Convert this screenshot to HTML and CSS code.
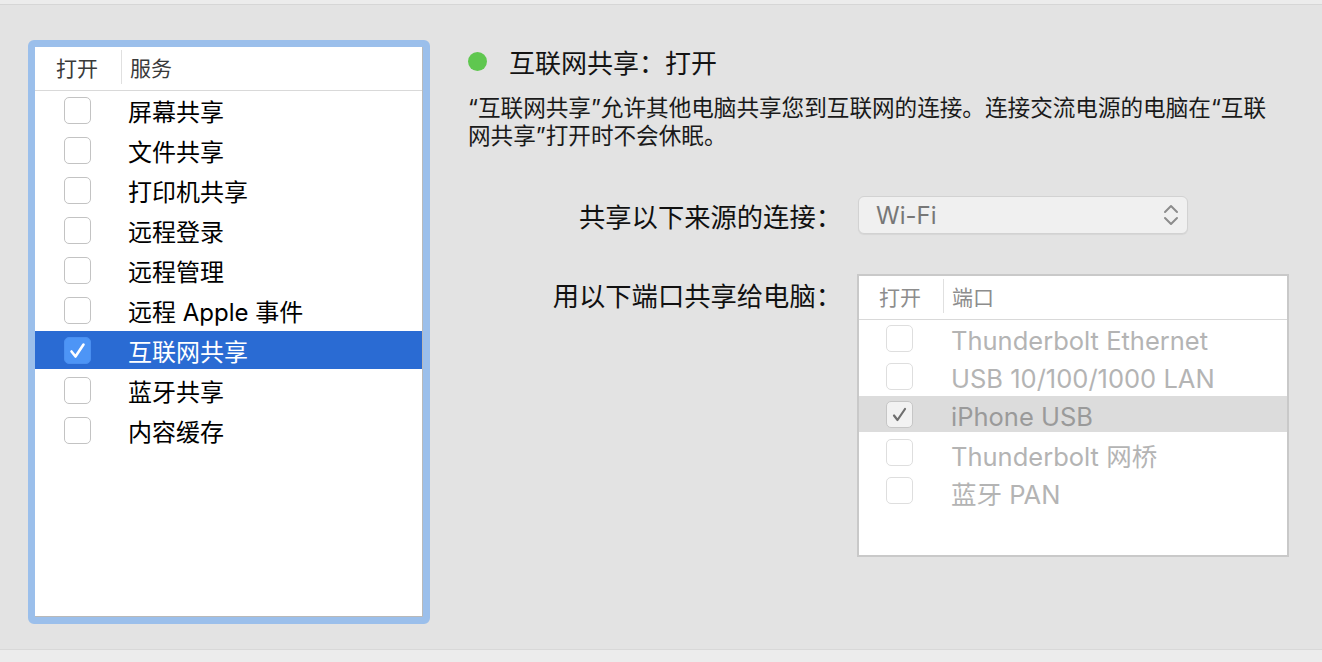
FILE: index.html
```html
<!DOCTYPE html>
<html lang="zh-CN">
<head>
  <meta charset="UTF-8" />
  <meta name="viewport" content="width=device-width, initial-scale=1.0"/>
  <title>共享</title>
  <link rel="stylesheet" href="styles.css">
</head>
<body>

  <div class="topbar"></div>

  <div class="main">
    <div class="service-panel">
      <div class="service-list">
        <div class="list-head">
          <span class="col-on">打开</span>
          <span class="col-sep"></span>
          <span class="col-name">服务</span>
        </div>
        <div class="row"><span class="box"></span><span class="label">屏幕共享</span></div>
        <div class="row"><span class="box"></span><span class="label">文件共享</span></div>
        <div class="row"><span class="box"></span><span class="label">打印机共享</span></div>
        <div class="row"><span class="box"></span><span class="label">远程登录</span></div>
        <div class="row"><span class="box"></span><span class="label">远程管理</span></div>
        <div class="row"><span class="box"></span><span class="label">远程 Apple 事件</span></div>
        <div class="row selected">
          <span class="box checked">
            <svg viewBox="0 0 27 27" width="27" height="27"><path d="M7.5 14.5 L11.5 19.5 L19.5 7.5" fill="none" stroke="#fff" stroke-width="2.6" stroke-linecap="round" stroke-linejoin="round"/></svg>
          </span>
          <span class="label">互联网共享</span>
        </div>
        <div class="row"><span class="box"></span><span class="label">蓝牙共享</span></div>
        <div class="row"><span class="box"></span><span class="label">内容缓存</span></div>
      </div>
    </div>

    <div class="detail">
      <div class="status">
        <span class="dot"></span>
        <span class="status-text">互联网共享：打开</span>
      </div>
      <p class="desc">“互联网共享”允许其他电脑共享您到互联网的连接。连接交流电源的电脑在“互联网共享”打开时不会休眠。</p>

      <div class="form">
        <div class="form-label">共享以下来源的连接：</div>
        <div class="popup">
          <span class="popup-value">Wi-Fi</span>
          <svg class="chevrons" viewBox="0 0 16 24" width="16" height="24"><path d="M2 9 L8 3 L14 9 M2 15 L8 21 L14 15" fill="none" stroke="#8c8c8c" stroke-width="2" stroke-linecap="round" stroke-linejoin="round"/></svg>
        </div>

        <div class="form-label top">用以下端口共享给电脑：</div>
        <div class="port-table">
          <div class="list-head port-head">
            <span class="col-on">打开</span>
            <span class="col-sep"></span>
            <span class="col-name">端口</span>
          </div>
          <div class="row port"><span class="box"></span><span class="label">Thunderbolt Ethernet</span></div>
          <div class="row port"><span class="box"></span><span class="label">USB 10/100/1000 LAN</span></div>
          <div class="row port marked">
            <span class="box on">
              <svg viewBox="0 0 27 27" width="27" height="27"><path d="M8 14.5 L11.5 19 L19 8" fill="none" stroke="#6f6f6f" stroke-width="2.2" stroke-linecap="round" stroke-linejoin="round"/></svg>
            </span>
            <span class="label">iPhone USB</span>
          </div>
          <div class="row port"><span class="box"></span><span class="label">Thunderbolt 网桥</span></div>
          <div class="row port"><span class="box"></span><span class="label">蓝牙 PAN</span></div>
        </div>
      </div>
    </div>
  </div>

  <div class="bottombar"></div>

</body>
</html>
```

FILE: styles.css
```css
html, body {
  margin: 0;
  padding: 0;
  height: 100%;
  overflow: hidden;
  font-family: 'Inter', 'Noto Sans CJK SC', sans-serif;
  background: #e3e3e3;
  color: #000;
}

body {
  display: flex;
  flex-direction: column;
}

.topbar {
  height: 4px;
  background: #ececec;
  border-bottom: 1px solid #d6d6d6;
}

.main {
  flex: 1;
  display: flex;
  align-items: flex-start;
  padding: 35px 0 0 28px;
  gap: 38px;
}

.bottombar {
  height: 12px;
  background: #ececec;
  border-top: 1px solid #d8d8d8;
}

/* left service list */

.service-panel {
  width: 388px;
  height: 570px;
  border: 7px solid #9bbfeb;
  border-radius: 6px;
  background: #fff;
}

.service-list {
  height: 100%;
  box-sizing: border-box;
  border-right: 1px solid #b9b9b9;
  border-bottom: 1px solid #b9b9b9;
}

.list-head {
  display: flex;
  align-items: center;
  height: 44px;
  padding-bottom: 3px;
  box-sizing: border-box;
  border-bottom: 1px solid #d9d9d9;
  font-size: 21px;
  color: #3a3a3a;
}

.col-on {
  padding-left: 21px;
  box-sizing: border-box;
  width: 86px;
}

.col-sep {
  width: 1px;
  height: 34px;
  background: #e0e0e0;
  margin-right: 8px;
}

.row {
  display: flex;
  align-items: center;
  height: 38px;
  margin-bottom: 2px;
  font-size: 24px;
}

.row .box {
  width: 27px;
  height: 27px;
  box-sizing: border-box;
  margin: 0 37px 0 29px;
  border: 1px solid #c3c3c3;
  border-radius: 5px;
  background: #fff;
  flex-shrink: 0;
}

.row .box svg {
  display: block;
  margin: -1px;
}

.row.selected {
  background: #2a6bd3;
  color: #fff;
}

.row .box.checked {
  background: #4d95f6;
  border-color: #4a8ff0;
}

/* right detail */

.detail {
  display: flex;
  flex-direction: column;
  padding-top: 7px;
}

.status {
  display: flex;
  align-items: center;
  height: 28px;
}

.dot {
  width: 19px;
  height: 19px;
  border-radius: 50%;
  background: #5fc74f;
  margin-right: 22px;
}

.status-text {
  font-size: 26px;
  color: #141414;
}

.desc {
  width: 808px;
  margin: 19px 0 0 0;
  font-size: 22.6px;
  line-height: 28px;
  color: #1a1a1a;
}

.form {
  display: grid;
  grid-template-columns: 374px auto;
  column-gap: 16px;
  row-gap: 39px;
  margin-top: 46px;
}

.form-label {
  text-align: right;
  font-size: 26.3px;
  align-self: center;
  color: #111;
}

.form-label.top {
  align-self: start;
  padding-top: 1px;
}

.popup {
  width: 330px;
  height: 38px;
  box-sizing: border-box;
  display: flex;
  align-items: center;
  justify-content: space-between;
  padding: 0 8px 0 17px;
  background: #f0f0f0;
  border: 1px solid #d2d2d2;
  border-radius: 6px;
  box-shadow: 0 1px 1px rgba(0, 0, 0, 0.06);
}

.popup-value {
  font-size: 24px;
  color: #777;
}

.port-table {
  width: 432px;
  height: 283px;
  box-sizing: border-box;
  margin-left: -1px;
  border: 2px solid #c9c9c9;
  background: #fff;
}

.port-head {
  height: 44px;
  color: #8d8d8d;
}

.port-head .col-on {
  padding-left: 20px;
  width: 84px;
}

.row.port {
  height: 36px;
  font-size: 25.5px;
  color: #b4b4b4;
}

.row.port .label {
  padding-top: 5px;
}

.row.port .box {
  margin: 0 38px 0 27px;
  border-color: #dedede;
}

.row.port.marked {
  background: #dcdcdc;
  color: #9a9a9a;
}

.row.port .box.on {
  background: #f2f2f2;
  border-color: #c6c6c6;
}
```
